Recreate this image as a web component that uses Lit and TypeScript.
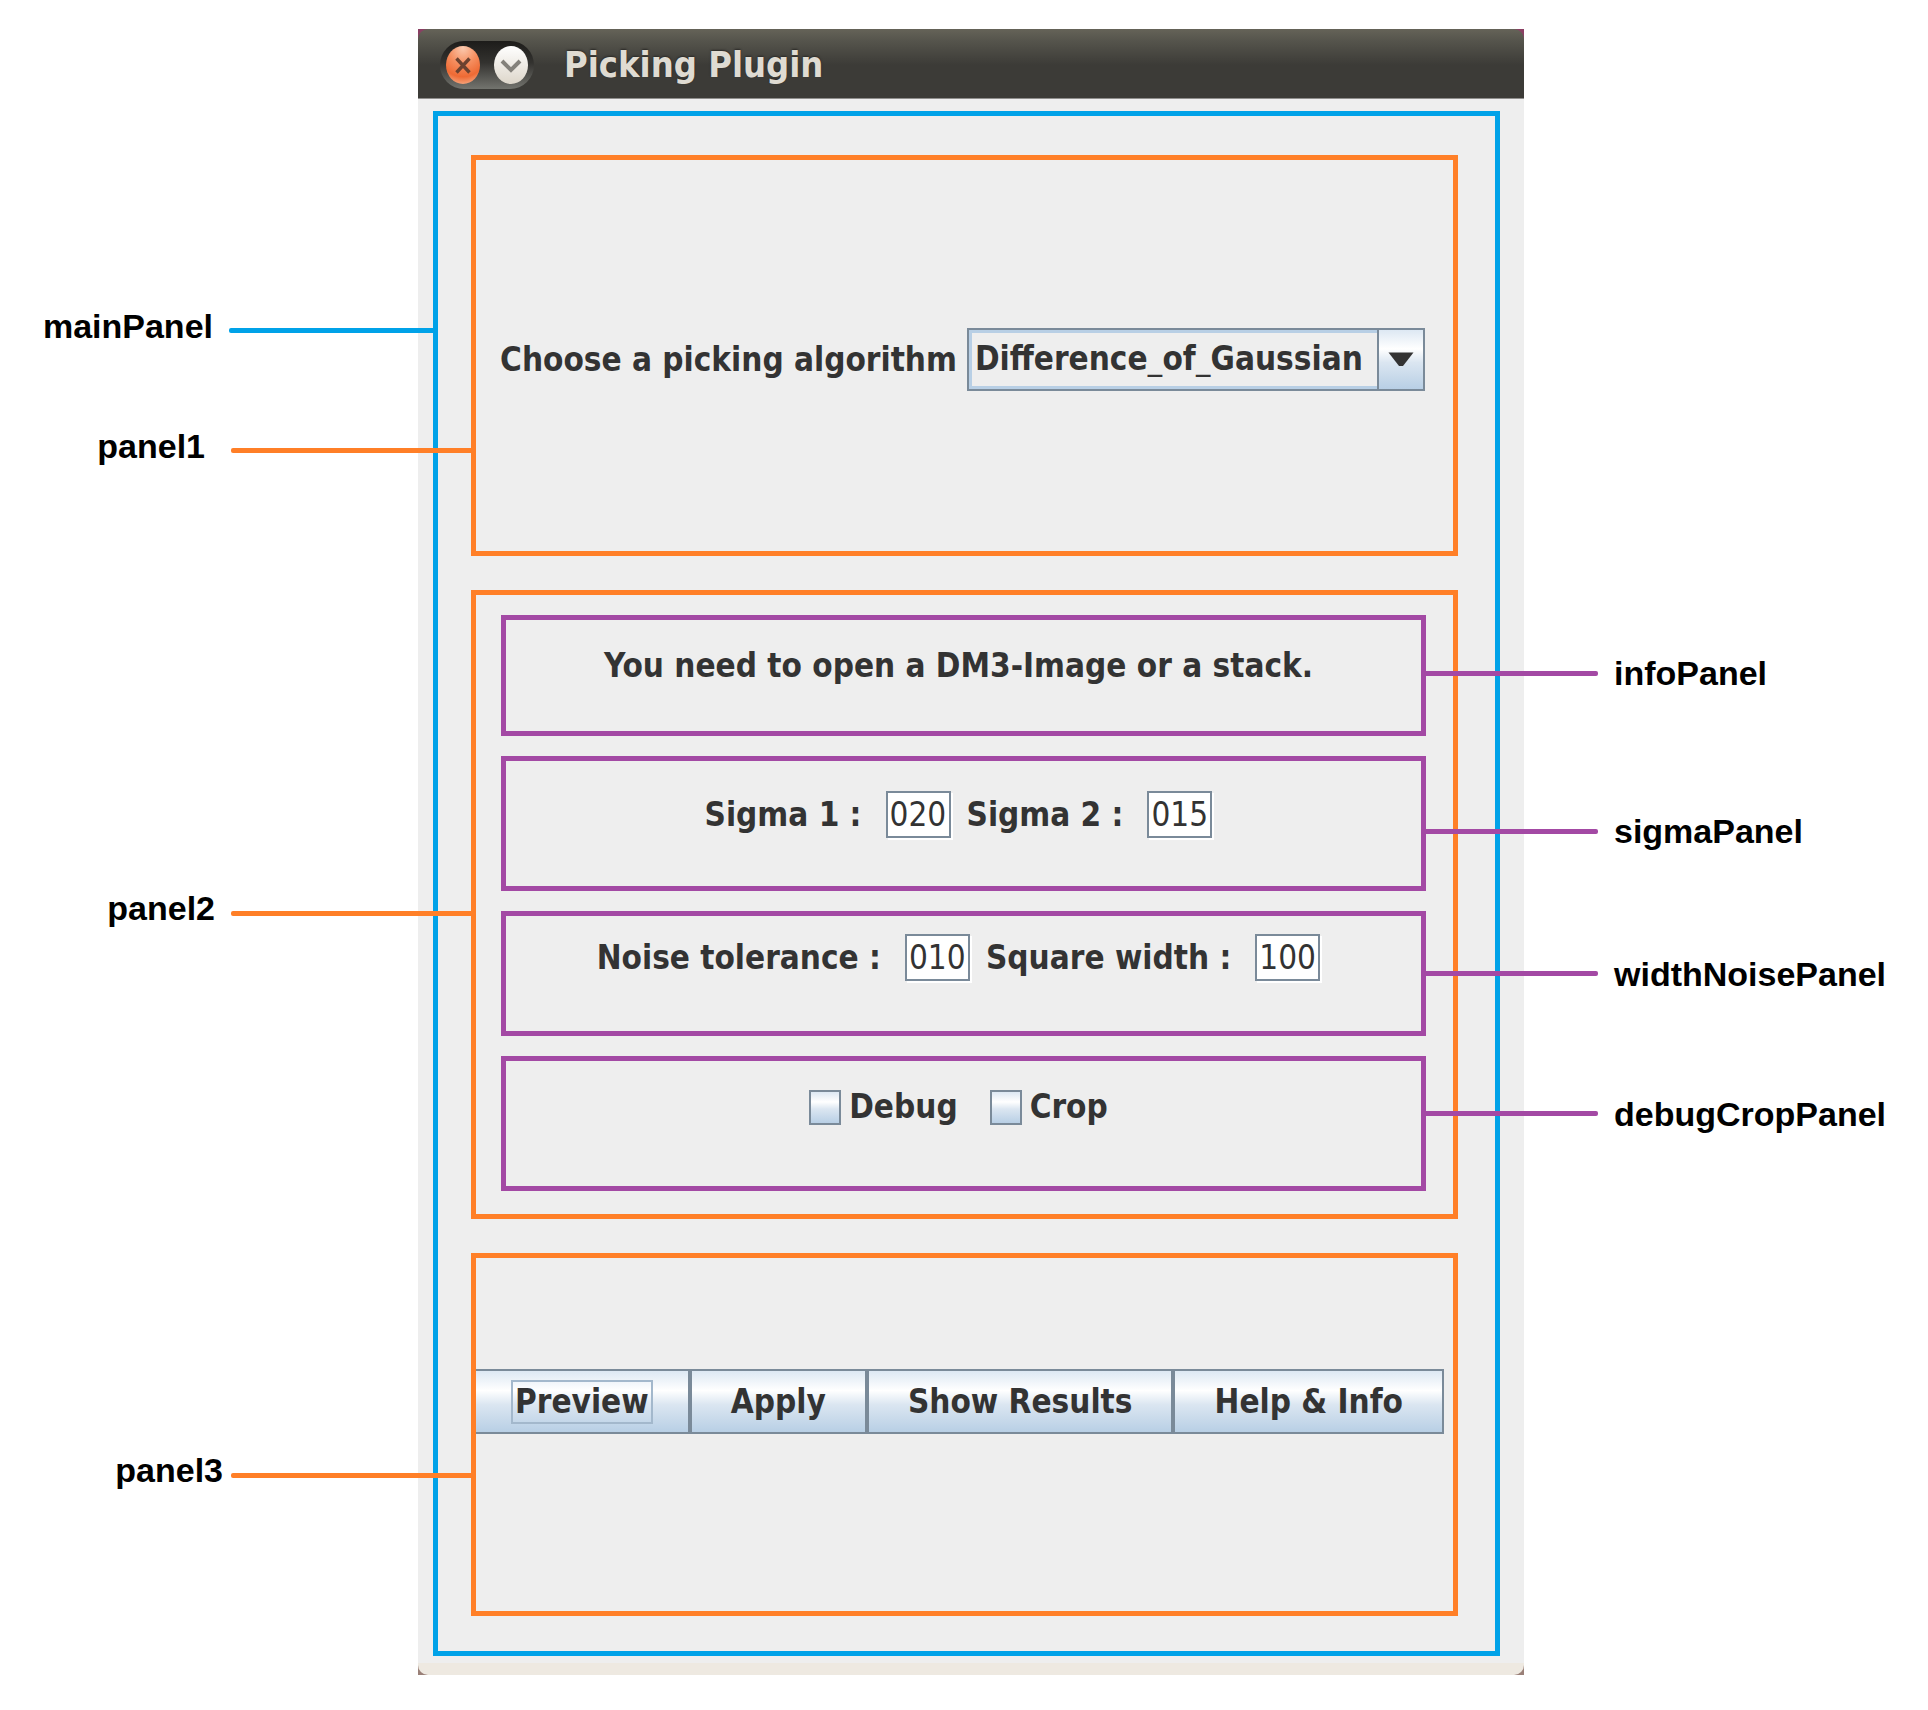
import { LitElement, html, css, svg } from "lit";
import { customElement, property } from "lit/decorators.js";

/** A leader line with a name, attached to the left or right edge of its parent box. */
@customElement("name-callout")
export class NameCallout extends LitElement {
  @property() side: "left" | "right" = "right";
  @property() tone: "blue" | "orange" | "purple" = "purple";
  @property() space: "narrow" | "normal" | "wide" = "normal";

  static styles = css`
    :host {
      position: absolute;
      height: 0;
      display: flex;
      align-items: center;
      z-index: 2;
    }
    :host([side="right"]) {
      left: 100%;
    }
    :host([side="left"]) {
      right: 100%;
    }
    .callout {
      display: flex;
      align-items: center;
      gap: 16px;
      font: bold 34px/40px "Liberation Sans", Arial, sans-serif;
      color: #000;
      white-space: nowrap;
    }
    .narrow {
      gap: 8px;
    }
    .wide {
      gap: 26px;
    }
    .left {
      flex-direction: row-reverse;
    }
    .left .name {
      padding-bottom: 10px;
    }
    .line {
      height: 5px;
      width: 177px;
      border-radius: 2px;
    }
    .left .line {
      width: 245px;
    }
    .left .blue {
      width: 209px;
    }
    .blue {
      background: #00a2e8;
    }
    .orange {
      background: #ff7f27;
    }
    .purple {
      background: #a349a4;
    }
  `;

  render() {
    return html`<div class="callout ${this.side} ${this.space}">
      <span class="line ${this.tone}"></span><span class="name"><slot></slot></span>
    </div>`;
  }
}

@customElement("app-root")
export class AppRoot extends LitElement {
  static styles = css`
    * {
      box-sizing: border-box;
    }
    :host {
      display: block;
      background: #fff;
      overflow: hidden;
      --steel: #7a8a99;
      --metal: linear-gradient(#dde8f3 0%, #fff 32%, #dbe6f1 55%, #b8cfe5 100%);
    }
    .page {
      display: grid;
      grid-template-columns: 418fr 1106fr 404fr;
      padding: 29px 0 35px;
    }
    .window {
      grid-column: 2;
      background: #eee;
      font: bold 33px/36px "DejaVu Sans Condensed", "DejaVu Sans", sans-serif;
      color: #333;
    }
    .corners-top {
      background: #8a3f63;
    }
    .titlebar {
      display: flex;
      align-items: center;
      gap: 30px;
      height: 70px;
      padding: 2px 22px 0;
      border-radius: 10px 10px 0 0;
      border-bottom: 1px solid #8f8e8c;
      background: linear-gradient(#656358 0, #55544c 12px, #3c3b37 36px);
    }
    .controls {
      display: flex;
      gap: 14px;
      padding: 4px 6px;
      border-radius: 24px;
      background: linear-gradient(#1d1c1a, #33322f 45%, #73746e);
    }
    .control {
      display: block;
      width: 34px;
      height: 40px;
      padding: 0;
      border: 0;
      background: none;
    }
    .control svg {
      display: block;
    }
    .title {
      margin: 0;
      font-size: 36px;
      line-height: 40px;
      color: #dfdbd2;
      text-shadow: 0 -1px 2px #2a2926;
    }
    .main {
      position: relative;
      display: flex;
      flex-direction: column;
      gap: 34px;
      margin: 12px 24px 7px 15px;
      padding: 39px 37px 35px 33px;
      border: 5px solid #00a2e8;
    }
    .panel {
      position: relative;
      border: 5px solid #ff7f27;
    }
    .algorithm {
      display: flex;
      align-items: center;
      justify-content: center;
      gap: 10px;
      padding: 168px 4px 160px 0;
    }
    .combo {
      position: relative;
      display: flex;
    }
    .combo select {
      appearance: none;
      height: 63px;
      margin: 0;
      padding: 0 60px 2px 6px;
      border: 2px solid var(--steel);
      border-radius: 0;
      background: #eee;
      box-shadow: inset 0 0 0 3px #b8cfe5;
      font: inherit;
      color: inherit;
    }
    .arrow {
      position: absolute;
      inset: 0 0 0 auto;
      display: grid;
      place-items: center;
      width: 48px;
      border: 2px solid var(--steel);
      background: var(--metal);
      pointer-events: none;
    }
    .settings {
      display: flex;
      flex-direction: column;
      gap: 20px;
      padding: 20px 27px 23px 25px;
    }
    .row {
      position: relative;
      display: flex;
      align-items: center;
      justify-content: center;
      border: 5px solid #a349a4;
      padding-right: 10px;
    }
    .info {
      padding-top: 28px;
      padding-bottom: 47px;
    }
    .sigma {
      padding-top: 30px;
      padding-bottom: 48px;
    }
    .noise {
      padding-top: 18px;
      padding-bottom: 50px;
    }
    .checks {
      gap: 32px;
      padding-top: 28px;
      padding-bottom: 61px;
    }
    .info p {
      margin: 0;
    }
    .fields {
      display: flex;
      gap: 16px;
    }
    .field {
      display: flex;
      align-items: center;
      gap: 24px;
    }
    .field input {
      width: 65px;
      height: 47px;
      padding: 0 2px;
      border: 2px solid var(--steel);
      border-radius: 0;
      background: #fff;
      box-shadow: 2px 2px 0 #fff;
      font: inherit;
      font-weight: normal;
      color: inherit;
    }
    .check {
      display: flex;
      align-items: center;
      gap: 8px;
    }
    .check input {
      appearance: none;
      width: 32px;
      height: 35px;
      margin: 0;
      border: 2px solid var(--steel);
      background: var(--metal);
    }
    .actions {
      display: flex;
      padding: 111px 9px 177px 0;
    }
    .actions button {
      flex: 1 1 auto;
      height: 65px;
      margin: 0;
      padding: 0;
      border: 2px solid var(--steel);
      border-radius: 0;
      background: var(--metal);
      font: inherit;
      color: inherit;
    }
    .actions button:first-child {
      border-left: 0;
    }
    .actions .focus {
      display: inline-block;
      margin: 0 -4px;
      padding: 2px;
      border: 2px solid #a3b8cc;
    }
    .frame-end {
      height: 12px;
      border-radius: 0 0 10px 10px;
      background: #eee9e1;
    }
    .corners-bottom {
      background: #9a8078;
    }
  `;

  private field(id: string, label: string, value: string) {
    return html`<div class="field">
      <label for=${id}>${label}</label><input id=${id} type="text" .value=${value} />
    </div>`;
  }

  private check(id: string, label: string) {
    return html`<div class="check">
      <input id=${id} type="checkbox" /><label for=${id}>${label}</label>
    </div>`;
  }

  private callout(name: string, side: string, tone: string, at: number, space = "normal") {
    return html`<name-callout side=${side} tone=${tone} space=${space} style="top:${at}%"
      >${name}</name-callout
    >`;
  }

  render() {
    return html`
      <div class="page">
        <div class="window">
          <div class="corners-top">
            <header class="titlebar">
              <div class="controls">
                <button class="control" aria-label="Close">
                  <svg width="34" height="40" viewBox="0 0 34 40" aria-hidden="true">
                    <defs>
                      <radialGradient id="close" cx="0.5" cy="0.05" r="0.95">
                        <stop offset="0" stop-color="#fbc9ae" />
                        <stop offset="0.45" stop-color="#f58e5f" />
                        <stop offset="0.8" stop-color="#ee6a34" />
                        <stop offset="1" stop-color="#f5a077" />
                      </radialGradient>
                    </defs>
                    <ellipse cx="17" cy="20" rx="17" ry="19" fill="url(#close)" />
                    <path d="M10.5 13.5L23.5 27.5M23.5 13.5L10.5 27.5" stroke="#6b4230" stroke-width="3.4" fill="none" />
                  </svg>
                </button>
                <button class="control" aria-label="Minimize">
                  <svg width="34" height="40" viewBox="0 0 34 40" aria-hidden="true">
                    <defs>
                      <linearGradient id="minimize" x1="0" y1="0" x2="0" y2="1">
                        <stop offset="0" stop-color="#fff" />
                        <stop offset="1" stop-color="#ddd6ca" />
                      </linearGradient>
                    </defs>
                    <ellipse cx="17" cy="20" rx="17" ry="19" fill="url(#minimize)" />
                    <path d="M8 16L17 25L26 16" stroke="#84817b" stroke-width="4" fill="none" />
                  </svg>
                </button>
              </div>
              <h1 class="title">Picking Plugin</h1>
            </header>
          </div>
          <main class="main">
            ${this.callout("mainPanel", "left", "blue", 14)}
            <section class="panel algorithm">
              <label for="algorithm">Choose a picking algorithm</label>
              <div class="combo">
                <select id="algorithm">
                  <option>Difference_of_Gaussian</option>
                </select>
                <span class="arrow">
                  <svg width="26" height="15" viewBox="0 0 26 15" aria-hidden="true">
                    <path d="M0.5 0.5H25.5L15 14H11Z" fill="#333" />
                  </svg>
                </span>
              </div>
              ${this.callout("panel1", "left", "orange", 74.4, "wide")}
            </section>
            <section class="panel settings">
              <div class="row info">
                <p>You need to open a DM3-Image or a stack.</p>
                ${this.callout("infoPanel", "right", "purple", 48)}
              </div>
              <div class="row sigma">
                <div class="fields">
                  ${this.field("sigma1", "Sigma 1 :", "020")}
                  ${this.field("sigma2", "Sigma 2 :", "015")}
                </div>
                ${this.callout("sigmaPanel", "right", "purple", 56)}
              </div>
              <div class="row noise">
                <div class="fields">
                  ${this.field("noise", "Noise tolerance :", "010")}
                  ${this.field("square", "Square width :", "100")}
                </div>
                ${this.callout("widthNoisePanel", "right", "purple", 50)}
              </div>
              <div class="row checks">
                ${this.check("debug", "Debug")} ${this.check("crop", "Crop")}
                ${this.callout("debugCropPanel", "right", "purple", 42)}
              </div>
              ${this.callout("panel2", "left", "orange", 51.4)}
            </section>
            <section class="panel actions">
              <button><span class="focus">Preview</span></button>
              <button>Apply</button>
              <button>Show Results</button>
              <button>Help &amp; Info</button>
              ${this.callout("panel3", "left", "orange", 61.5, "narrow")}
            </section>
          </main>
          <div class="corners-bottom"><div class="frame-end"></div></div>
        </div>
      </div>
    `;
  }
}
